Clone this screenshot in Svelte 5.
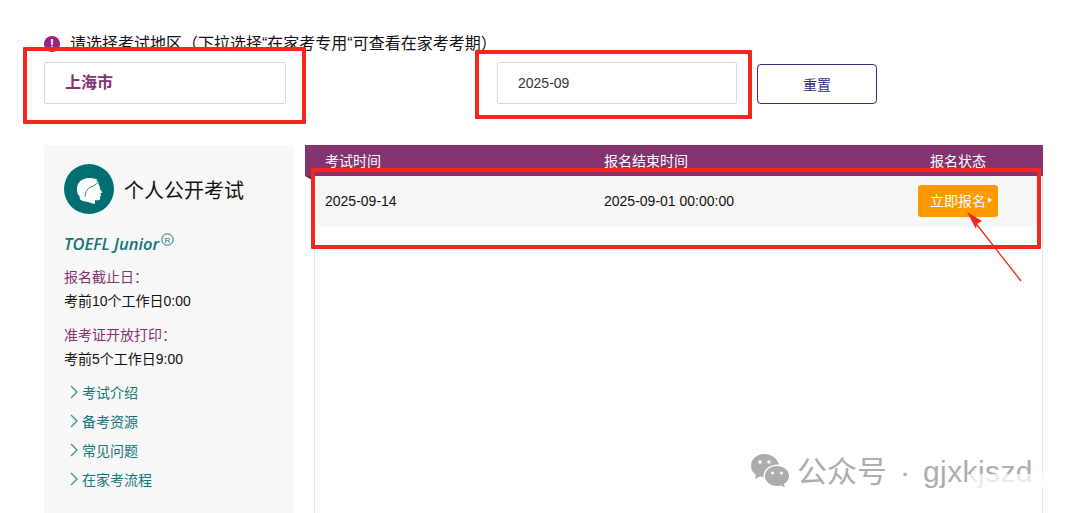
<script lang="ts">
	const sideInfo = [
		{ label: '报名截止日：', value: '考前10个工作日0:00' },
		{ label: '准考证开放打印：', value: '考前5个工作日9:00' }
	];
	const links = ['考试介绍', '备考资源', '常见问题', '在家考流程'];
</script>

<div class="page">
	<p class="notice">
		<span class="bang">!</span>
		<span class="hint">请选择考试地区（下拉选择“在家考专用“可查看在家考考期）</span>
	</p>

	<div class="filters">
		<div class="field city">上海市</div>
		<div class="field month">2025-09</div>
		<button class="reset">重置</button>
	</div>

	<div class="content">
		<aside>
			<div class="brand">
				<svg class="logo" width="50" height="50" viewBox="0 0 50 50">
					<circle cx="25" cy="25" r="25" fill="#006f71" />
					<path
						d="M13 27c-1-8 5-13 12-13 3 0 6 .5 8.500 1.500l-1.500 1.500 3 1-1 1.500c1.500 1.500 2 3.500 2 5.500l2.500 3.500-2 .8.400 2.700-1 .8.300 2c-.5 1.700-2.500 1.700-5 1.200l-.5 4c-4-.5-8-3-12-3-2.500-.5-3.500-2.500-3-4.500-1.700-1.500-2.500-3.500-2.700-5.800z"
						fill="#fff"
					/>
					<path d="M21 33c.5-6 3-9 6-10 3-1 5-2.500 7-5" fill="none" stroke="#006f71" stroke-width="0.800" />
				</svg>
				<h2>个人公开考试</h2>
			</div>
			<p class="product">
				TOEFL Junior
				<svg class="reg" width="13" height="13" viewBox="0 0 13 13">
					<circle cx="6.500" cy="6.500" r="5.700" fill="none" stroke="#12757a" />
					<text x="6.500" y="9.500" text-anchor="middle">R</text>
				</svg>
			</p>
			{#each sideInfo as item}
				<dl>
					<dt>{item.label}</dt>
					<dd>{item.value}</dd>
				</dl>
			{/each}
			<ul>
				{#each links as link}
					<li>
						<svg width="8" height="14" viewBox="0 0 8 14">
							<path d="M1 1l6 6-6 6" fill="none" stroke="#4c8f92" stroke-width="1.400" />
						</svg>
						{link}
					</li>
				{/each}
			</ul>
		</aside>

		<section class="panel">
			<div class="head">
				<span>考试时间</span>
				<span>报名结束时间</span>
				<span class="status">报名状态</span>
			</div>
			<div class="body">
				<div class="row">
					<span>2025-09-14</span>
					<span>2025-09-01 00:00:00</span>
					<button class="apply">立即报名<i></i></button>
				</div>
			</div>
		</section>
	</div>

	<div class="mark one"></div>
	<div class="mark two"></div>
	<div class="mark three"></div>
	<svg class="arrow" width="70" height="80" viewBox="0 0 70 80">
		<path d="M61 74L14 14" fill="none" stroke="#f5261c" stroke-width="1.300" />
		<path d="M7 5L22 14 17 17 16 22z" fill="#f5261c" />
	</svg>

	<div class="watermark">
		<svg width="40" height="34" viewBox="0 0 40 34">
			<path
				d="M15 1C7 1 1 6 1 13c0 4 2 7 5 9l-1 4 5-2.500c1 .3 2 .5 3.500.6C13 17 19 11 29 11.500 27 5.500 21 1 15 1z"
				fill="#adadad"
			/>
			<path
				d="M27 13c-7 0-12 4.500-12 10s5 10 12 10c1.500 0 3-.2 4-.6l4 2.300-1-3.700c3-2 5-4.600 5-8 0-5.500-5-10-12-10z"
				fill="#adadad"
			/>
			<circle cx="10" cy="9" r="1.800" fill="#fff" />
			<circle cx="19" cy="9" r="1.800" fill="#fff" />
			<circle cx="22.500" cy="20" r="1.500" fill="#fff" />
			<circle cx="31.500" cy="20" r="1.500" fill="#fff" />
		</svg>
		<span class="mark-text">公众号<b>·</b><em>gjxkjszd</em></span>
		<div class="wipe"></div>
	</div>
</div>

<style>
	:global(body) {
		margin: 0;
		background: #fff;
	}
	.page {
		position: relative;
		width: 1067px;
		height: 513px;
		overflow: hidden;
		padding: 35px 0 0 44px;
		box-sizing: border-box;
		font-family: 'Liberation Sans', 'Noto Sans CJK SC', sans-serif;
		font-size: 14px;
		color: #111;
	}
	.notice {
		display: flex;
		align-items: center;
		gap: 10px;
		height: 17px;
		margin: 0;
		font-size: 16px;
	}
	.hint {
		margin-bottom: 3px;
	}
	.bang {
		width: 16px;
		height: 16px;
		border-radius: 50%;
		background: #9b2087;
		color: #fff;
		font-size: 12px;
		font-weight: 700;
		line-height: 16px;
		text-align: center;
	}
	.filters {
		display: flex;
		align-items: flex-end;
		margin-top: 10px;
	}
	.field {
		box-sizing: border-box;
		height: 42px;
		border: 1px solid #d9d9d9;
		border-radius: 2px;
		line-height: 40px;
		background: #fff;
	}
	.city {
		width: 242px;
		padding-left: 20px;
		font-size: 16px;
		font-weight: 700;
		color: #84336f;
	}
	.month {
		width: 240px;
		margin-left: 211px;
		padding-left: 20px;
		color: #333;
	}
	.reset {
		width: 120px;
		height: 40px;
		margin-left: 20px;
		padding: 0;
		border: 1px solid #2f2f7d;
		border-radius: 4px;
		background: #fff;
		color: #2f2f7d;
		font: inherit;
	}
	.content {
		display: flex;
		gap: 11px;
		margin-top: 41px;
	}
	aside {
		box-sizing: border-box;
		width: 250px;
		height: 368px;
		padding: 19px 20px 0;
		background: #f8f8f8;
	}
	.brand {
		display: flex;
		align-items: center;
		gap: 10px;
	}
	.logo {
		flex: none;
	}
	h2 {
		margin: 0;
		font-size: 20px;
		font-weight: 400;
		color: #111;
	}
	.product {
		display: flex;
		align-items: flex-start;
		gap: 2px;
		height: 20px;
		margin: 20px 0 11px;
		font-family: 'Open Sans', sans-serif;
		font-size: 16.500px;
		font-style: italic;
		font-weight: 600;
		line-height: 20px;
		color: #12757a;
	}
	.reg {
		margin-top: -1px;
	}
	.reg text {
		font-family: 'Liberation Sans', sans-serif;
		font-size: 8px;
		font-style: normal;
		font-weight: 400;
		fill: #12757a;
	}
	dl {
		margin: 0 0 10px;
	}
	dt {
		height: 24px;
		line-height: 24px;
		color: #84336f;
	}
	dd {
		height: 24px;
		margin: 0;
		line-height: 24px;
	}
	ul {
		margin: -4px 0 0 6px;
		padding: 0;
		list-style: none;
		color: #12757a;
	}
	li {
		display: flex;
		align-items: center;
		gap: 4px;
		height: 29px;
	}
	.panel {
		position: relative;
		width: 738px;
		height: 368px;
	}
	.head,
	.row {
		display: grid;
		grid-template-columns: 279px 314px 80px;
		align-items: center;
		box-sizing: border-box;
	}
	.head {
		height: 31px;
		padding: 0 0 2px 20px;
		background: #84336f;
		color: #fff;
	}
	.head::after {
		content: '';
		position: absolute;
		left: 0;
		top: 31px;
		border-top: 5px solid #6b2459;
		border-left: 9px solid transparent;
	}
	.status {
		justify-self: center;
		white-space: nowrap;
	}
	.body {
		height: 337px;
		margin-left: 9px;
		border-left: 1px solid #e6e6e6;
		border-right: 1px solid #e6e6e6;
	}
	.row {
		height: 51px;
		padding: 0 0 2px 10px;
		background: #f7f7f7;
	}
	.apply {
		display: flex;
		align-items: center;
		justify-content: center;
		gap: 2px;
		width: 80px;
		height: 32px;
		padding: 0 0 2px 6px;
		border: 0;
		border-radius: 3px;
		background: #ff9900;
		color: #fff;
		font: inherit;
	}
	.apply i {
		border-left: 4px solid #fff;
		border-top: 3px solid transparent;
		border-bottom: 3px solid transparent;
	}
	.mark {
		position: absolute;
		box-sizing: border-box;
		border: 4px solid #f5261c;
		border-radius: 1px;
	}
	.one {
		left: 23px;
		top: 47px;
		width: 283px;
		height: 77px;
	}
	.two {
		left: 475px;
		top: 50px;
		width: 277px;
		height: 69px;
	}
	.three {
		left: 311px;
		top: 168px;
		width: 730px;
		height: 81px;
	}
	.arrow {
		position: absolute;
		left: 960px;
		top: 207px;
	}
	.watermark {
		position: absolute;
		left: 750px;
		top: 452px;
		display: flex;
		align-items: center;
		gap: 7px;
		height: 36px;
		color: #adadad;
		font-size: 30px;
		white-space: nowrap;
	}
	.mark-text {
		margin-bottom: 2px;
	}
	.watermark b {
		margin: 0 13px;
		font-weight: 400;
	}
	.watermark em {
		font-style: normal;
		letter-spacing: 0.4px;
	}
	.wipe {
		position: absolute;
		left: 217px;
		top: 22px;
		width: 80px;
		height: 14px;
		background: #fff;
		opacity: 0.75;
	}
</style>
